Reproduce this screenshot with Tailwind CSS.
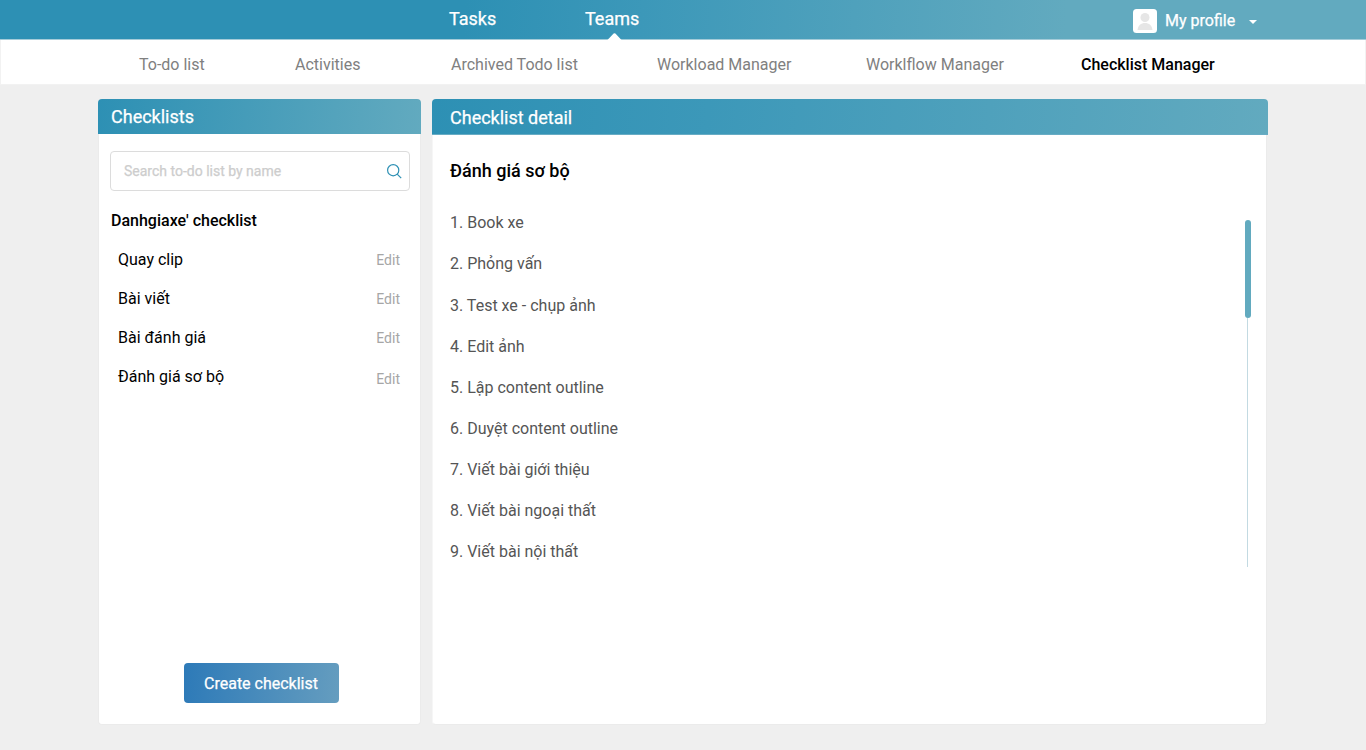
<!DOCTYPE html>
<html lang="vi">
<head>
<meta charset="utf-8">
<title>Checklist Manager</title>
<script src="https://cdn.jsdelivr.net/npm/@tailwindcss/browser@4"></script>
</head>
<body class="h-[750px] overflow-hidden bg-[#efefef] font-['Roboto',sans-serif] text-base text-black antialiased">
<header class="flex h-10 border-b border-[#a5ccd9] bg-[linear-gradient(93deg,#2d90b4_34%,#3c98b9_47%,#62aabf_78%)] bg-origin-border pl-[449px] text-white [-webkit-text-stroke:0.25px_white]">
  <a class="w-[136px] pt-[7px] text-lg leading-6">Tasks</a>
  <a class="relative w-[548px] pt-[7px] text-lg leading-6">Teams
    <svg class="absolute top-[33px] left-[22px]" width="15" height="8" viewBox="0 0 15 8"><path d="M0 7.5 6.6.6Q7.5-.3 8.4.6L15 7.5V8H0Z" fill="#fff"/></svg>
  </a>
  <a class="flex h-[42px] items-center">
    <svg class="mr-2" width="24" height="24" viewBox="0 0 24 24"><rect width="24" height="24" rx="3.5" fill="#fff"/><circle cx="12" cy="8.5" r="4.5" fill="#e6e6e6"/><path d="M4.5 21C5 16.500 8 14 12 14s7 2.500 7.500 7Z" fill="#e6e6e6"/></svg>
    <span class="w-[83px]">My profile</span>
    <svg class="mt-0.5" width="10" height="6" viewBox="0 0 10 6"><path d="M1 1h8L5 5Z" fill="#fff"/></svg>
  </a>
</header>
<nav class="flex h-[45px] border border-t-0 border-[#f2f2f2] bg-white pt-[13px] pl-[138px] leading-6 whitespace-nowrap text-[#808080]">
  <a class="w-[156px]">To-do list</a>
  <a class="w-[156px]">Activities</a>
  <a class="w-[206px]">Archived Todo list</a>
  <a class="w-[209px]">Workload Manager</a>
  <a class="w-[215px]">Worklflow Manager</a>
  <a class="font-medium text-black">Checklist Manager</a>
</nav>
<main class="flex gap-[11px] pt-3.5 pl-[98px]">
  <section class="flex h-[626px] w-[323px] flex-col">
    <h2 class="h-[35px] rounded-t bg-[linear-gradient(95deg,#2d90b4,#62aabf)] pt-1.5 pl-[13px] text-lg leading-6 text-white [-webkit-text-stroke:0.25px_white]">Checklists</h2>
    <div class="flex flex-1 flex-col rounded-b border border-t-0 border-[#ebebeb] bg-white pt-[17px] pr-2.5 pl-[11px]">
      <div class="flex h-10 w-[300px] items-center justify-between rounded border border-[#dcdcdc] pr-[7px] pl-[13px] text-sm text-[#cdcdcd]">
        <span class="[-webkit-text-stroke:0.25px_#cdcdcd]">Search to-do list by name</span>
        <svg width="15" height="15" viewBox="0 0 15 15" fill="none" stroke="#2d90b4" stroke-width="1.200"><circle cx="6.200" cy="6.200" r="5.600"/><path d="m10.200 10.200 4 4"/></svg>
      </div>
      <h3 class="mt-[18px] pl-px leading-6 font-medium">Danhgiaxe' checklist</h3>
      <ul class="mt-[15px] flex flex-col gap-[15px] pr-2.5 pl-2">
        <li class="flex h-6 justify-between leading-6"><span>Quay clip</span><a class="text-sm leading-6 text-[#a6a6a6]">Edit</a></li>
        <li class="flex h-6 justify-between leading-6"><span>Bài viết</span><a class="text-sm leading-6 text-[#a6a6a6]">Edit</a></li>
        <li class="flex h-6 justify-between leading-6"><span>Bài đánh giá</span><a class="text-sm leading-6 text-[#a6a6a6]">Edit</a></li>
        <li class="flex h-6 justify-between leading-6"><span>Đánh giá sơ bộ</span><a class="pt-0.5 text-sm leading-6 text-[#a6a6a6]">Edit</a></li>
      </ul>
      <button class="mt-auto mb-[21px] ml-[74px] h-10 w-[155px] rounded bg-[linear-gradient(95deg,#2d7ab8,#659dbf)] pt-0.5 pr-px text-white [-webkit-text-stroke:0.25px_white]">Create checklist</button>
    </div>
  </section>
  <section class="flex h-[626px] w-[836px] flex-col">
    <h2 class="h-9 rounded-t border-b border-[#68acc4] bg-[linear-gradient(95deg,#2d90b4,#3c98b9_33%,#62aabf)] pt-[7px] pl-[18px] text-lg leading-6 text-white [-webkit-text-stroke:0.25px_white]">Checklist detail</h2>
    <div class="mr-px flex-1 rounded-b border border-t-0 border-[#ebebeb] border-l-[#f6f6f6] bg-white pt-6 pr-[15px] pl-[17px]">
      <h3 class="text-lg leading-6 font-medium">Đánh giá sơ bộ</h3>
      <div class="mt-[37px] flex h-[347px] justify-between">
        <ol class="-mt-[8.650px] flex flex-col gap-[17.100px] leading-6 text-[#555]">
          <li>1. Book xe</li>
          <li>2. Phỏng vấn</li>
          <li>3. Test xe - chụp ảnh</li>
          <li>4. Edit ảnh</li>
          <li>5. Lập content outline</li>
          <li>6. Duyệt content outline</li>
          <li>7. Viết bài giới thiệu</li>
          <li>8. Viết bài ngoại thất</li>
          <li>9. Viết bài nội thất</li>
        </ol>
        <div class="flex w-1.5 flex-col">
          <div class="h-[98px] rounded-sm bg-[#62aabf]"></div>
          <div class="ml-0.5 w-px flex-1 bg-[#c3dae2]"></div>
        </div>
      </div>
    </div>
  </section>
</main>
</body>
</html>
